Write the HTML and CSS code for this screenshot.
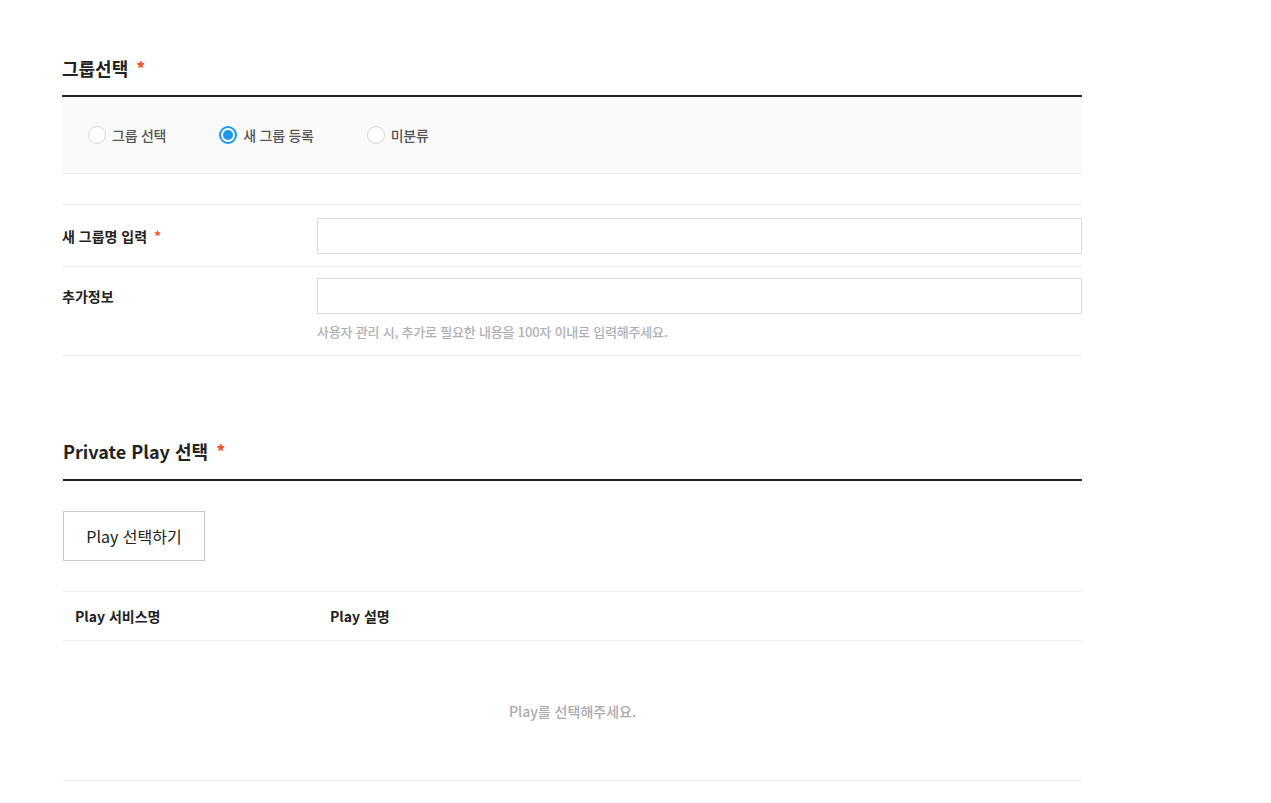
FILE: index.html
```html
<!DOCTYPE html>
<html lang="ko">
<head>
    <meta charset="UTF-8">
    <meta name="viewport" content="width=device-width, initial-scale=1.0">
    <title>그룹 등록</title>
    <link rel="stylesheet" href="styles.css">
</head>
<body>
    <div class="wrap">
        <section class="section">
            <h2 class="sec-title">그룹선택 <span class="req">*</span></h2>
            <div class="radio-box">
                <label class="radio"><span class="dot"></span>그룹 선택</label>
                <label class="radio on"><span class="dot"></span>새 그룹 등록</label>
                <label class="radio"><span class="dot"></span>미분류</label>
            </div>

            <div class="form">
                <div class="row first">
                    <div class="label">새 그룹명 입력 <span class="req">*</span></div>
                    <div class="field">
                        <input type="text" class="input">
                    </div>
                </div>
                <div class="row second">
                    <div class="label">추가정보</div>
                    <div class="field">
                        <input type="text" class="input">
                        <p class="help">사용자 관리 시, 추가로 필요한 내용을 100자 이내로 입력해주세요.</p>
                    </div>
                </div>
            </div>
        </section>

        <section class="section play">
            <h2 class="sec-title">Private Play 선택 <span class="req">*</span></h2>
            <button class="btn">Play 선택하기</button>

            <table class="tbl">
                <thead>
                    <tr>
                        <th class="col-name">Play 서비스명</th>
                        <th>Play 설명</th>
                    </tr>
                </thead>
                <tbody>
                    <tr>
                        <td colspan="2" class="empty">Play를 선택해주세요.</td>
                    </tr>
                </tbody>
            </table>
        </section>
    </div>
</body>
</html>
```

FILE: styles.css
```css
body {
    margin: 0;
    font-family: "Noto Sans CJK KR", "Noto Sans", sans-serif;
    color: #222;
    background: white;
}
.wrap {
    width: 1020px;
    margin-left: 62px;
    padding-top: 54px;
}
.sec-title {
    margin: 0;
    font-size: 18px;
    line-height: 28px;
    font-weight: 700;
    padding-bottom: 13px;
    border-bottom: 2px solid #222;
}
.play .sec-title {
    line-height: 26px;
    padding-bottom: 15px;
}
.req {
    color: #f0522a;
    margin-left: 3px;
}

/* radio group */
.radio-box {
    display: flex;
    align-items: center;
    height: 76px;
    padding: 0 26px;
    background: #fafafa;
    border-bottom: 1px solid #eee;
}
.radio {
    display: flex;
    align-items: center;
    font-size: 14px;
    font-weight: 500;
    letter-spacing: -0.25px;
    color: #555;
    margin-right: 53px;
}
.radio .dot {
    width: 16px;
    height: 16px;
    border: 1px solid #d8d8dc;
    border-radius: 50%;
    background: white;
    margin-right: 6px;
    box-sizing: content-box;
    position: relative;
}
.radio.on .dot {
    border: 2px solid #1a97f0;
    width: 14px;
    height: 14px;
}
.radio.on .dot::after {
    content: "";
    position: absolute;
    left: 2px;
    top: 2px;
    width: 10px;
    height: 10px;
    border-radius: 50%;
    background: #1a97f0;
}

/* form rows */
.form {
    margin-top: 30px;
    border-top: 1px solid #eee;
}
.row {
    display: grid;
    grid-template-columns: 255px 1fr;
    border-bottom: 1px solid #eee;
}
.row.first {
    padding: 13px 0 12px;
}
.row.second {
    padding: 11px 0 13px;
}
.label {
    font-size: 14px;
    font-weight: 700;
    line-height: 36px;
    height: 36px;
}
.input {
    display: block;
    width: 100%;
    height: 36px;
    box-sizing: border-box;
    border: 1px solid #dcdce0;
    margin: 0;
    padding: 0 12px;
    font-family: inherit;
    font-size: 14px;
}
.help {
    margin: 8px 0 0;
    font-size: 13px;
    font-weight: 500;
    letter-spacing: -0.2px;
    line-height: 20px;
    color: #b0b0b4;
}

/* play section */
.play {
    margin-top: 82px;
    margin-left: 1px;
}
.btn {
    display: block;
    margin-top: 30px;
    width: 142px;
    height: 50px;
    background: white;
    border: 1px solid #c8c8cc;
    font-family: inherit;
    font-size: 16px;
    color: #222;
    padding: 0;
}
.tbl {
    width: 100%;
    margin-top: 30px;
    border-collapse: collapse;
}
.tbl th {
    text-align: left;
    font-size: 14px;
    font-weight: 700;
    height: 48px;
    padding: 0 12px;
    border-top: 1px solid #eee;
    border-bottom: 1px solid #eee;
}
.tbl .col-name {
    width: 231px;
}
.empty {
    height: 139px;
    text-align: center;
    font-size: 14px;
    font-weight: 500;
    color: #aaaab0;
    border-bottom: 1px solid #eee;
    padding: 0;
}
```
